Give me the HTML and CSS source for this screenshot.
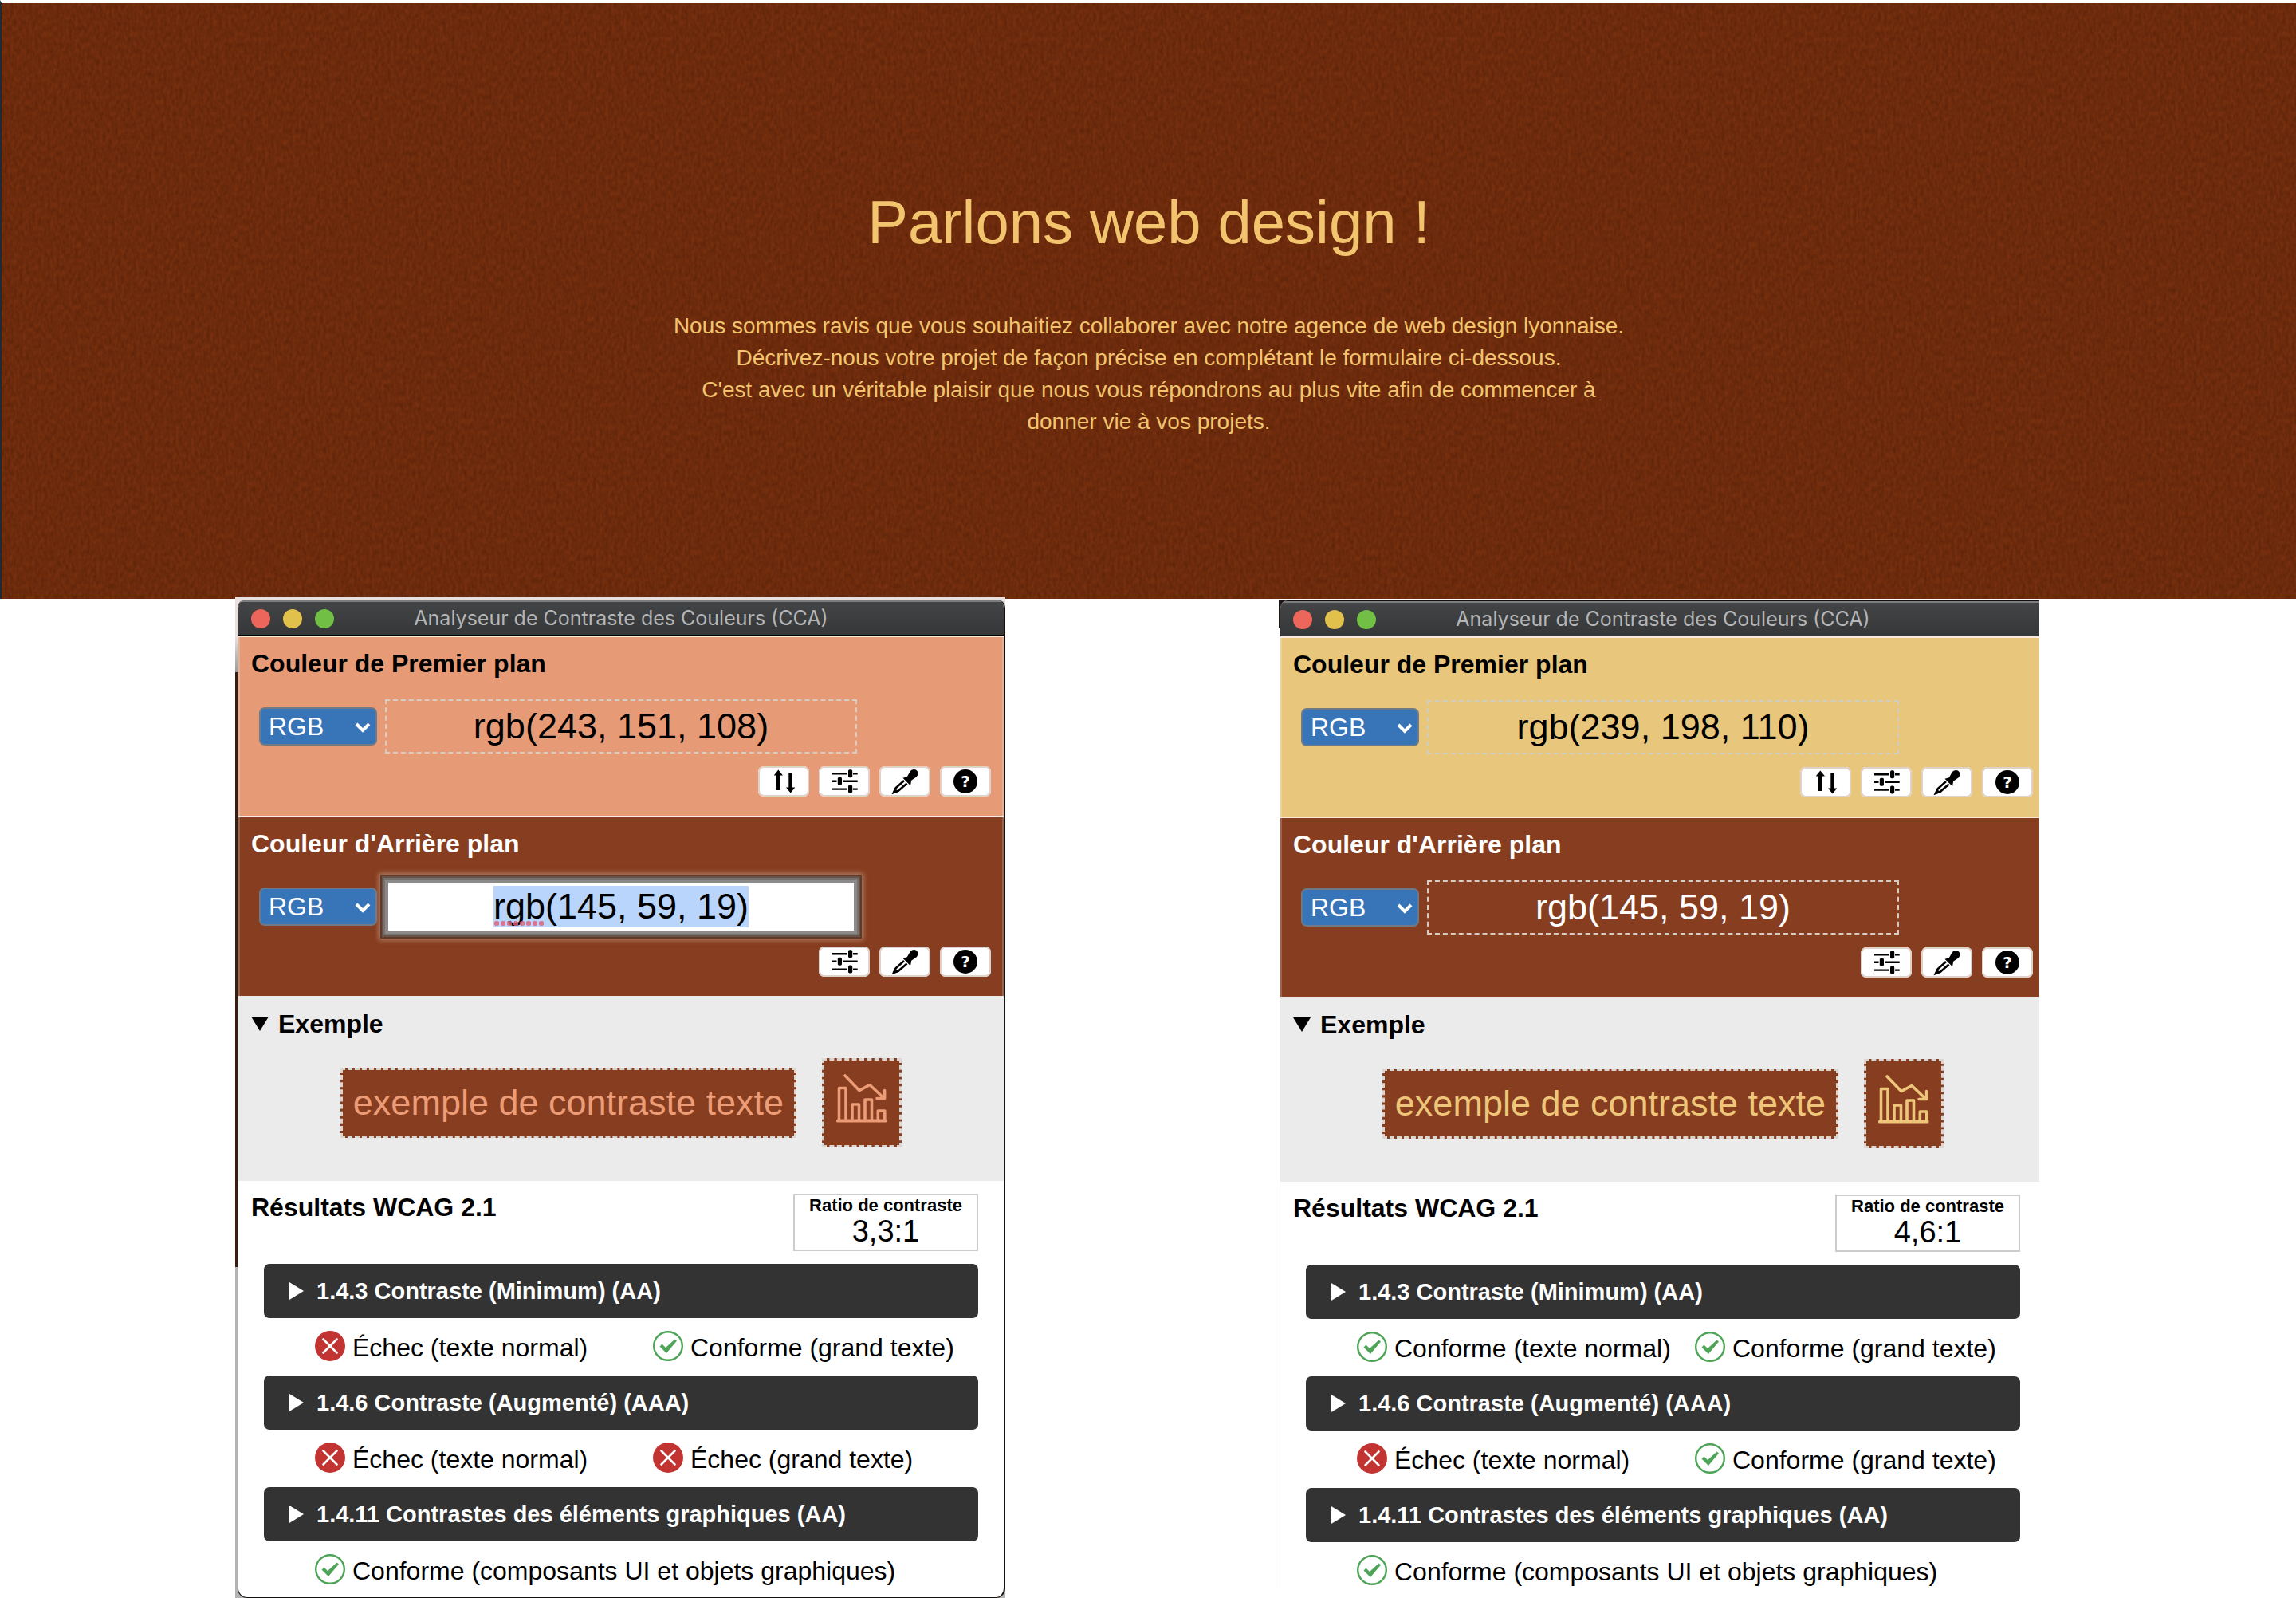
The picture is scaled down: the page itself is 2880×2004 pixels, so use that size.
FILE: index.html
```html
<!DOCTYPE html>
<html lang="fr">
<head>
<meta charset="utf-8">
<title>Parlons web design !</title>
<link rel="stylesheet" href="styles.css">
</head>
<body>
<svg class="sprite" aria-hidden="true">
  <symbol id="swap" viewBox="0 0 64 38">
    <path d="M25.3 4.5 31 11.5H27.7V30H23V11.5H19.7ZM40.7 33.5 35 26.5H38.3V8H43V26.5H46.3Z"/>
  </symbol>
  <symbol id="sliders" viewBox="0 0 64 38">
    <path d="M17 9.3H36M43 9.3H48.7M17 18.8H22.5M30 18.8H48.7M17 28.6H36M43 28.6H48.7" fill="none" stroke="#000" stroke-width="2.4"/>
    <rect x="37" y="4.3" width="5.2" height="10" rx="1.8"/>
    <rect x="23.8" y="13.8" width="5.2" height="10" rx="1.8"/>
    <rect x="37" y="23.6" width="5.2" height="10" rx="1.8"/>
  </symbol>
  <symbol id="dropper" viewBox="0 0 64 38">
    <path d="M29.5 14.8 34.8 13.2 38.2 7.2C40.3 3.8 44.3 3 46.8 5.2 49.4 7.6 49 11.8 45.6 14L40.2 17.8 39 24.2Z"/>
    <path d="M31 18 20.6 27.4 18 33 23.8 30.8 34.6 21.4" fill="none" stroke="#000" stroke-width="2.6"/>
    <path d="M16.8 34.2 19 27.5 24.5 31.5Z"/>
  </symbol>
  <symbol id="chart" viewBox="0 0 64 64">
    <path d="M3.5 57V17.5H12V57M20 57V38H28.5V57M36 57V32H44.5V57M52.3 57V46H60.8V57M11 2 28.8 20.6 42 13.5 59 29.5M60.6 20.5V30.5H51" fill="none" stroke="currentColor" stroke-width="3.6" stroke-linecap="round" stroke-linejoin="round"/>
    <rect x="0" y="56.5" width="63.5" height="4" rx="1.5" fill="currentColor"/>
  </symbol>
  <symbol id="pass" viewBox="0 0 38 38">
    <circle cx="19" cy="19" r="17.8" fill="#fff" stroke="#4da457" stroke-width="2.4"/>
    <path d="M8.5 19.5 11.5 16.5 16 21 27.5 10.5 30 12.5 17 28Z" fill="#4da457"/>
  </symbol>
  <symbol id="fail" viewBox="0 0 38 38">
    <circle cx="19" cy="19" r="19" fill="#c23431"/>
    <path d="M10.5 10.5 27.5 27.5M27.5 10.5 10.5 27.5" fill="none" stroke="#fff" stroke-width="2.6" stroke-linecap="round"/>
  </symbol>
  <symbol id="chevron" viewBox="0 0 20 14">
    <path d="M2 3 10 11 18 3" fill="none" stroke="#fff" stroke-width="4"/>
  </symbol>
</svg>

<header class="hero">
  <svg class="hero-texture" width="100%" height="100%" aria-hidden="true">
    <filter id="grain" x="0" y="0" width="100%" height="100%" color-interpolation-filters="sRGB">
      <feTurbulence type="fractalNoise" baseFrequency="0.26 0.14" numOctaves="3" seed="4"/>
      <feColorMatrix values="0 0 0 0 0.22  0 0 0 0 0.07  0 0 0 0 0  0.6 0 0 0 -0.12"/>
    </filter>
    <rect width="100%" height="100%" filter="url(#grain)"/>
  </svg>
  <h1>Parlons web design !</h1>
  <p>Nous sommes ravis que vous souhaitiez collaborer avec notre agence de web design lyonnaise.<br>Décrivez-nous votre projet de façon précise en complétant le formulaire ci-dessous.<br>C'est avec un véritable plaisir que nous vous répondrons au plus vite afin de commencer à donner vie à vos projets.</p>
</header>

<main class="desk">
  <div class="frame frame-salmon">
    <article class="window">
      <div class="titlebar">
        <div class="lights"><i class="close"></i><i class="minimize"></i><i class="expand"></i></div>
        <span>Analyseur de Contraste des Couleurs (CCA)</span>
      </div>
      <section class="color foreground">
        <h2><label for="fg-1">Couleur de Premier plan</label></h2>
        <div class="value-row">
          <div class="format"><select aria-label="Format de la couleur de premier plan"><option>RGB</option></select><svg><use href="#chevron"/></svg></div>
          <div class="value"><input id="fg-1" type="text" value="rgb(243, 151, 108)"></div>
        </div>
        <div class="tools">
          <button type="button" aria-label="Inverser"><svg><use href="#swap"/></svg></button>
          <button type="button" aria-label="Réglages"><svg><use href="#sliders"/></svg></button>
          <button type="button" aria-label="Pipette"><svg><use href="#dropper"/></svg></button>
          <button type="button" aria-label="Aide"><span class="help">?</span></button>
        </div>
      </section>
      <section class="color background">
        <h2><label for="bg-1">Couleur d'Arrière plan</label></h2>
        <div class="value-row">
          <div class="format"><select aria-label="Format de la couleur d'arrière plan"><option>RGB</option></select><svg><use href="#chevron"/></svg></div>
          <div class="value misspelt"><input id="bg-1" class="active" type="text" value="rgb(145, 59, 19)"></div>
        </div>
        <div class="tools">
          <button type="button" aria-label="Réglages"><svg><use href="#sliders"/></svg></button>
          <button type="button" aria-label="Pipette"><svg><use href="#dropper"/></svg></button>
          <button type="button" aria-label="Aide"><span class="help">?</span></button>
        </div>
      </section>
      <details class="example" open>
        <summary>Exemple</summary>
        <div class="samples">
          <div class="sample sample-text">exemple de contraste texte</div>
          <div class="sample sample-icon"><svg><use href="#chart"/></svg></div>
        </div>
      </details>
      <section class="results">
        <div class="results-head">
          <h2>Résultats WCAG 2.1</h2>
          <div class="ratio"><strong>Ratio de contraste</strong><span>3,3:1</span></div>
        </div>
        <button type="button" class="criterion">1.4.3 Contraste (Minimum) (AA)</button>
        <ul>
          <li><svg><use href="#fail"/></svg><span>Échec (texte normal)</span></li>
          <li><svg><use href="#pass"/></svg><span>Conforme (grand texte)</span></li>
        </ul>
        <button type="button" class="criterion">1.4.6 Contraste (Augmenté) (AAA)</button>
        <ul>
          <li><svg><use href="#fail"/></svg><span>Échec (texte normal)</span></li>
          <li><svg><use href="#fail"/></svg><span>Échec (grand texte)</span></li>
        </ul>
        <button type="button" class="criterion">1.4.11 Contrastes des éléments graphiques (AA)</button>
        <ul class="single">
          <li><svg><use href="#pass"/></svg><span>Conforme (composants UI et objets graphiques)</span></li>
        </ul>
      </section>
    </article>
  </div>

  <div class="frame frame-gold">
    <article class="window">
      <div class="titlebar">
        <div class="lights"><i class="close"></i><i class="minimize"></i><i class="expand"></i></div>
        <span>Analyseur de Contraste des Couleurs (CCA)</span>
      </div>
      <section class="color foreground">
        <h2><label for="fg-2">Couleur de Premier plan</label></h2>
        <div class="value-row">
          <div class="format"><select aria-label="Format de la couleur de premier plan"><option>RGB</option></select><svg><use href="#chevron"/></svg></div>
          <div class="value"><input id="fg-2" type="text" value="rgb(239, 198, 110)"></div>
        </div>
        <div class="tools">
          <button type="button" aria-label="Inverser"><svg><use href="#swap"/></svg></button>
          <button type="button" aria-label="Réglages"><svg><use href="#sliders"/></svg></button>
          <button type="button" aria-label="Pipette"><svg><use href="#dropper"/></svg></button>
          <button type="button" aria-label="Aide"><span class="help">?</span></button>
        </div>
      </section>
      <section class="color background">
        <h2><label for="bg-2">Couleur d'Arrière plan</label></h2>
        <div class="value-row">
          <div class="format"><select aria-label="Format de la couleur d'arrière plan"><option>RGB</option></select><svg><use href="#chevron"/></svg></div>
          <div class="value"><input id="bg-2" type="text" value="rgb(145, 59, 19)"></div>
        </div>
        <div class="tools">
          <button type="button" aria-label="Réglages"><svg><use href="#sliders"/></svg></button>
          <button type="button" aria-label="Pipette"><svg><use href="#dropper"/></svg></button>
          <button type="button" aria-label="Aide"><span class="help">?</span></button>
        </div>
      </section>
      <details class="example" open>
        <summary>Exemple</summary>
        <div class="samples">
          <div class="sample sample-text">exemple de contraste texte</div>
          <div class="sample sample-icon"><svg><use href="#chart"/></svg></div>
        </div>
      </details>
      <section class="results">
        <div class="results-head">
          <h2>Résultats WCAG 2.1</h2>
          <div class="ratio"><strong>Ratio de contraste</strong><span>4,6:1</span></div>
        </div>
        <button type="button" class="criterion">1.4.3 Contraste (Minimum) (AA)</button>
        <ul>
          <li><svg><use href="#pass"/></svg><span>Conforme (texte normal)</span></li>
          <li><svg><use href="#pass"/></svg><span>Conforme (grand texte)</span></li>
        </ul>
        <button type="button" class="criterion">1.4.6 Contraste (Augmenté) (AAA)</button>
        <ul>
          <li><svg><use href="#fail"/></svg><span>Échec (texte normal)</span></li>
          <li><svg><use href="#pass"/></svg><span>Conforme (grand texte)</span></li>
        </ul>
        <button type="button" class="criterion">1.4.11 Contrastes des éléments graphiques (AA)</button>
        <ul class="single">
          <li><svg><use href="#pass"/></svg><span>Conforme (composants UI et objets graphiques)</span></li>
        </ul>
      </section>
    </article>
  </div>
</main>
<script src="script.js"></script>
</body>
</html>
```
FILE: script.js
```js
const active = document.querySelector('input.active');
active.focus();
active.select();
```
FILE: styles.css
```css
* { box-sizing: border-box; }

body {
  margin: 0;
  background: #fff;
  color: #000;
  font-family: "Liberation Sans", Arial, sans-serif;
}

h1, h2, p, ul { margin: 0; padding: 0; font-weight: normal; }
svg { display: block; }
.sprite { position: absolute; width: 0; height: 0; }

/* Hero */
.hero {
  position: relative;
  padding: 230px 0 202px;
  border-top: 4px solid #fff;
  border-left: 2px solid #1f2a33;
  background: #78300f;
  color: #f2c46d;
  text-align: center;
}
.hero-texture { position: absolute; inset: 0; }
.hero h1 {
  position: relative;
  font-size: 76px;
  line-height: 90px;
}
.hero p {
  position: relative;
  max-width: 1200px;
  margin: 65px auto 0;
  font-size: 28px;
  line-height: 40px;
}

/* Windows */
.desk {
  display: grid;
  grid-template-columns: 295fr 966fr 343fr 954fr 322fr;
  align-items: start;
  margin-top: -2px;
}
.frame { position: relative; }
.frame-salmon {
  --fg: #e79a76;
  grid-column: 2;
  padding: 3px 0 0 3px;
  background: linear-gradient(#e8e0df 0 50px, #9a9a9a 94px, #3a1d0d 94px 840px, #b4b4b4 840px);
}
.frame-gold {
  --fg: #e8c77c;
  grid-column: 4;
  margin-top: 3px;
  padding: 1px 0 0 1px;
  background: linear-gradient(#1c1617 36px, #fff 36px);
  overflow: hidden;
}
.window {
  background: #fff;
  border: solid #15110f;
  border-width: 0 2px 1px 1px;
  border-radius: 10px 10px 12px 12px;
  overflow: hidden;
}
.frame-gold .window {
  margin-right: -10px;
  border-width: 0 2px 0 1px;
  border-radius: 10px 0 0 0;
}
.titlebar {
  display: grid;
  grid-template-columns: 1fr auto 1fr;
  align-items: center;
  height: 45px;
  padding: 2px 16px 0;
  border-top: 1px solid #111;
  border-bottom: 1px solid #000;
  background: linear-gradient(#7a7c7d 2px, #424446 2px, #363738);
  color: #b4b5b6;
  font: 25px/41px Inter, sans-serif;
}
.lights { display: flex; gap: 16px; }
.lights i { width: 24px; height: 24px; border-radius: 50%; }
.close { background: #ed665b; }
.minimize { background: #e1c04b; }
.expand { background: #71c045; }

h2, summary { font-size: 32px; line-height: 34px; font-weight: bold; }

.color {
  padding: 16px 16px 24px;
  border-top: 2px solid #fbe9de;
  box-shadow: inset 2px 0 #ffffff33, inset -2px 0 #ffffff33;
}
.foreground { background: var(--fg); }
.background { background: #873d1f; color: #fff; }
.value-row {
  display: flex;
  align-items: center;
  gap: 10px;
  margin: 28px 168px 16px 10px;
}
.format { position: relative; width: 148px; }
.format select {
  appearance: none;
  display: block;
  width: 100%;
  height: 48px;
  padding: 0 0 0 10px;
  border: 2px solid #6f7a86;
  border-radius: 7px;
  background: #3875b8;
  color: #fff;
  font: 32px "Liberation Sans", Arial, sans-serif;
}
.format svg {
  position: absolute;
  right: 8px;
  top: 18px;
  width: 20px;
  height: 14px;
  pointer-events: none;
}
.value { position: relative; flex: 1; }
.value input {
  display: block;
  width: 100%;
  height: 68px;
  padding: 0;
  border: 2px dashed #d6cdc6;
  background: none;
  color: inherit;
  font: 45px "Liberation Sans", Arial, sans-serif;
  text-align: center;
  outline: none;
}
.frame-gold .foreground input { border-color: #cfccc0; }
.value input.active {
  border: 4px solid #8b8a89;
  background: #fff;
  color: #000;
  box-shadow: 0 0 0 2px #77716e, 0 0 0 4px #665248, 0 0 0 6px #5c3b2b, 0 0 6px 8px #b07f68;
}
.value input::selection { background: #b9d5fb; color: #000; }
.misspelt::after {
  content: "";
  position: absolute;
  left: 136px;
  bottom: 10px;
  width: 64px;
  height: 6px;
  background: radial-gradient(circle, #e0607acc 3px, transparent 3px) 0 0 / 8px 6px;
}
.tools { display: flex; justify-content: flex-end; gap: 12px; }
.tools button {
  display: grid;
  place-items: center;
  width: 64px;
  height: 38px;
  padding: 0;
  border: 0;
  border-radius: 7px;
  background: #fff;
  box-shadow: inset 0 0 0 2px #dfd2cb;
}
.tools svg { width: 64px; height: 38px; }
.help {
  width: 30px;
  height: 30px;
  border-radius: 50%;
  background: #000;
  color: #fff;
  font: bold 20px/30px "DejaVu Sans", sans-serif;
}

/* Sample */
.example { padding: 18px 16px 42px; background: #ebebeb; }
summary { display: flex; align-items: center; gap: 12px; list-style: none; }
summary::before {
  content: "";
  border: solid transparent;
  border-width: 18px 11px 0;
  border-top-color: #000;
}
.samples {
  display: flex;
  justify-content: center;
  align-items: center;
  gap: 32px;
  margin-top: 26px;
}
.sample {
  border: 3px dashed #ddd5d0;
  background: #873d1f;
  color: #ec9c76;
}
.frame-gold .sample { color: #eec67a; }
.sample-text { padding: 0 13px; font-size: 45px; line-height: 82px; }
.sample-icon { padding: 17px 15px 25px; }
.sample-icon svg { width: 64px; height: 64px; }

/* Results */
.results { padding: 16px 32px 0; }
.results-head {
  display: flex;
  justify-content: space-between;
  align-items: flex-start;
  margin: 0 0 16px -16px;
}
.ratio {
  display: flex;
  flex-direction: column;
  align-items: center;
  width: 232px;
  height: 72px;
  border: 2px solid #ccc;
}
.ratio strong { font-size: 22px; line-height: 26px; }
.ratio span { font-size: 38px; line-height: 38px; }
.criterion {
  display: flex;
  align-items: center;
  gap: 16px;
  width: 100%;
  height: 68px;
  padding: 0 32px;
  border: 0;
  border-radius: 7px;
  background: #333;
  color: #fff;
  font: bold 29px "Liberation Sans", Arial, sans-serif;
}
.criterion::before {
  content: "";
  border: solid transparent;
  border-width: 11px 0 11px 18px;
  border-left-color: #fff;
}
.results ul {
  display: grid;
  grid-template-columns: 424px 1fr;
  padding: 16px 0 18px 64px;
  list-style: none;
}
.results ul.single { grid-template-columns: 1fr; padding-bottom: 16px; }
.frame-gold ul.single { padding-bottom: 4px; }
.results li {
  display: flex;
  align-items: center;
  gap: 9px;
  height: 38px;
  font-size: 32px;
  white-space: nowrap;
}
.results li svg { width: 38px; height: 38px; }
.results li span { padding-top: 4px; }
```
